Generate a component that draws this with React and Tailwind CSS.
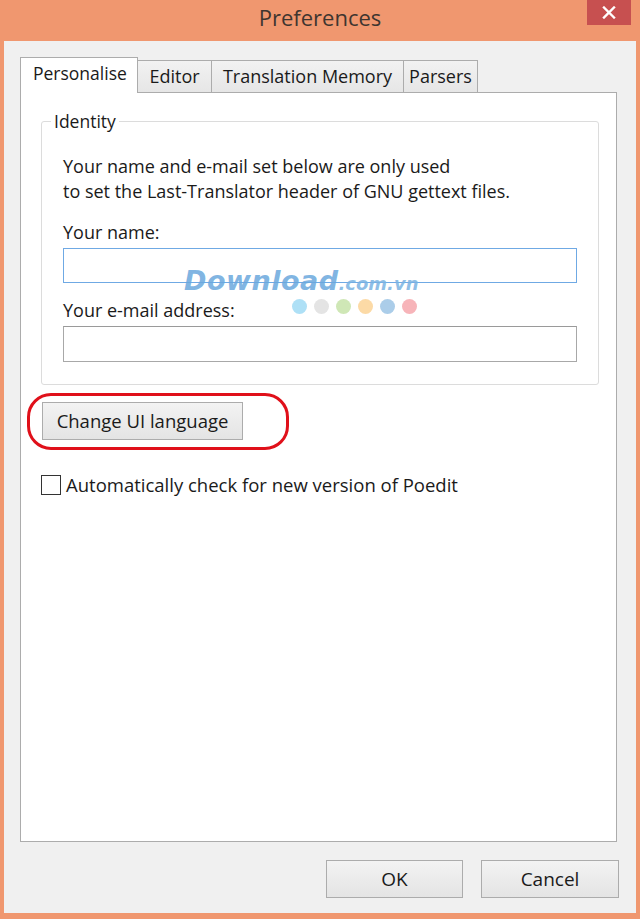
export default function App() {
  const btn =
    "border border-[#acacac] bg-linear-to-b from-[#f3f3f3] to-[#e4e4e4] text-[#1a1a1a] flex items-center justify-center";
  return (
    <div className="w-[640px] h-[919px] bg-[#f0976f] flex flex-col font-['Open_Sans',sans-serif] text-[#1a1a1a]">
      {/* Title bar */}
      <div className="h-[41px] shrink-0 grid grid-cols-[1fr_auto_1fr] items-start">
        <div />
        <div className="text-[22px] leading-[34px] text-[#3e3530]">Preferences</div>
        <div className="flex justify-end pr-[9px]">
          <div className="w-[44px] h-[25px] bg-[#c75050] flex items-center justify-center">
            <svg width="14" height="13" viewBox="0 0 14 13">
              <path d="M2 1.5 L12 11.5 M12 1.5 L2 11.5" stroke="#ffffff" strokeWidth="2.4" strokeLinecap="square" />
            </svg>
          </div>
        </div>
      </div>

      {/* Body */}
      <div className="flex-1 mx-[4px] mb-[6px] bg-[#f0f0f0] flex flex-col">
        {/* Tabs */}
        <div className="flex items-end pl-[16px] pt-[16px] h-[51px] shrink-0 relative z-10">
          <div className="w-[118px] h-[36px] -mb-px bg-white border border-b-0 border-[#acacac] text-[17.5px] leading-none flex items-center pl-[12px] pb-[4px]">
            Personalise
          </div>
          <div className="w-[74px] h-[32px] bg-linear-to-b from-[#f2f2f2] to-[#e6e6e6] border-t border-r border-[#acacac] text-[18px] leading-none flex items-center justify-center pb-[1px]">
            Editor
          </div>
          <div className="w-[192px] h-[32px] bg-linear-to-b from-[#f2f2f2] to-[#e6e6e6] border-t border-r border-[#acacac] text-[18px] leading-none flex items-center justify-center pb-[1px]">
            Translation Memory
          </div>
          <div className="w-[74px] h-[32px] bg-linear-to-b from-[#f2f2f2] to-[#e6e6e6] border-t border-r border-[#acacac] text-[18px] leading-none flex items-center justify-center pb-[1px]">
            Parsers
          </div>
        </div>

        {/* Panel */}
        <div className="flex-1 ml-[16px] mr-[19px] bg-white border border-[#acacac] relative flex flex-col items-start text-[18px]">
          <fieldset className="mt-[16px] ml-[20px] self-stretch mr-[17px] border border-[#dcdcdc] rounded-[3px] px-[21px] pb-[22px]">
            <legend className="-ml-[12px] px-[3px] leading-[24px] text-[17.5px]">Identity</legend>
            <div className="mt-[21px] leading-[25px]">
              <div>Your name and e-mail set below are only used</div>
              <div>to set the Last-Translator header of GNU gettext files.</div>
            </div>
            <div className="mt-[16px] leading-[25px]">Your name:</div>
            <div className="mt-[3px] h-[35px] border border-[#6fa9e4] bg-white" />
            <div className="mt-[15px] leading-[25px]">Your e-mail address:</div>
            <div className="mt-[3px] h-[36px] border border-[#a8a8a8] border-t-[#9a9a9a] bg-white" />
          </fieldset>

          <div className="relative mt-[17px] ml-[21px]">
            <div className={`${btn} w-[201px] h-[38px] text-[18.5px]`}>Change UI language</div>
            <div className="absolute -left-[15px] -top-[9px] w-[262px] h-[57px] border-[3px] border-[#e0101a] rounded-[24px] pointer-events-none" />
          </div>

          <div className="mt-[33px] ml-[20px] flex items-center gap-[5px]">
            <div className="w-[20px] h-[20px] border border-[#333333] bg-white" />
            <div className="leading-[24px] text-[18.5px]">Automatically check for new version of Poedit</div>
          </div>

          {/* Watermark */}
          <div className="absolute left-[163px] top-[174px] flex flex-col pointer-events-none font-['DejaVu_Sans',sans-serif] italic font-bold">
            <div className="flex items-baseline leading-none">
              <span className="text-[27px] text-[#6aa8dd]/85 tracking-[0.5px]">Download</span>
              <span className="text-[18px] text-[#7ab3e2]/85">.com.vn</span>
            </div>
            <div className="flex gap-[7px] ml-[108px] mt-[5px]">
              <div className="w-[15px] h-[15px] rounded-full bg-[#aee0f6]" />
              <div className="w-[15px] h-[15px] rounded-full bg-[#e4e4e4]" />
              <div className="w-[15px] h-[15px] rounded-full bg-[#cfe7b6]" />
              <div className="w-[15px] h-[15px] rounded-full bg-[#fcdaa6]" />
              <div className="w-[15px] h-[15px] rounded-full bg-[#abcde9]" />
              <div className="w-[15px] h-[15px] rounded-full bg-[#f7b4b9]" />
            </div>
          </div>
        </div>

        {/* Buttons */}
        <div className="flex justify-end gap-[18px] pr-[17px] pt-[18px] pb-[15px] shrink-0">
          <div className={`${btn} w-[137px] h-[38px] text-[19px]`}>OK</div>
          <div className={`${btn} w-[138px] h-[38px] text-[19px]`}>Cancel</div>
        </div>
      </div>
    </div>
  );
}
